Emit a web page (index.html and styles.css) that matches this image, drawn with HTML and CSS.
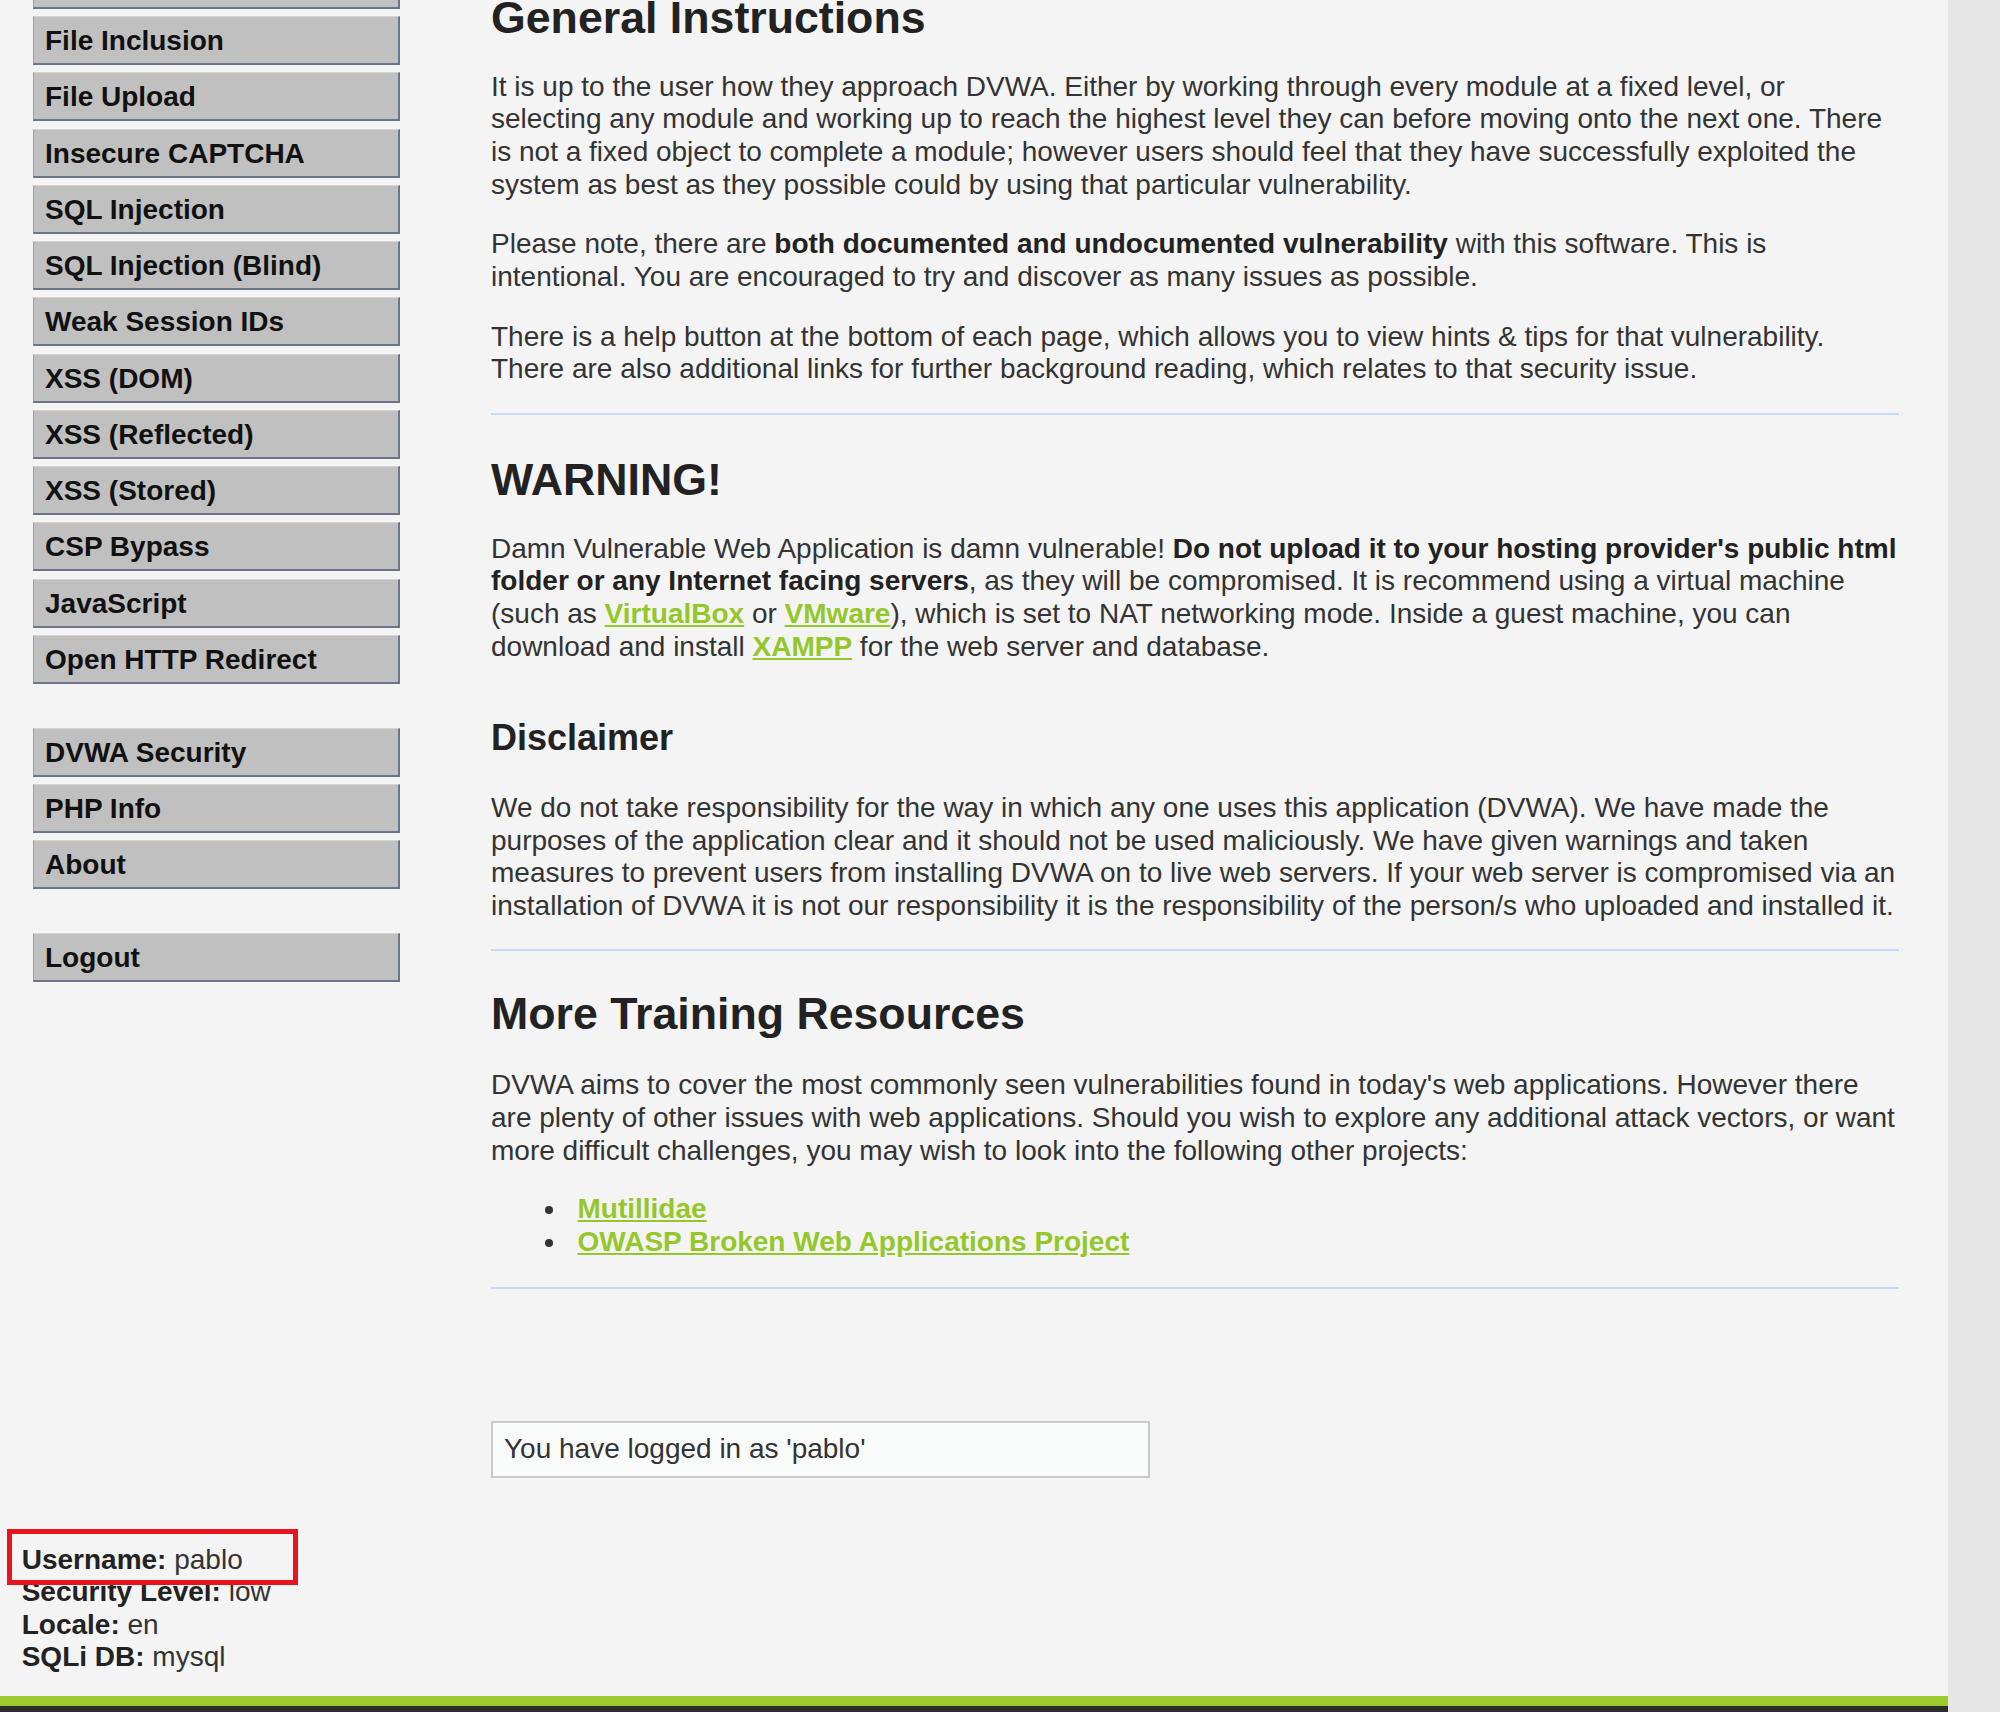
FILE: index.html
```html
<!DOCTYPE html>
<html>
<head>
  <title>DVWA</title>
  <link rel="stylesheet" href="styles.css">
</head>
<body>

  <div class="container">
    <div class="main">
      <div class="sidebar">
        <ul class="menu-block">
          <li><a href="#">CSRF</a></li>
          <li><a href="#">File Inclusion</a></li>
          <li><a href="#">File Upload</a></li>
          <li><a href="#">Insecure CAPTCHA</a></li>
          <li><a href="#">SQL Injection</a></li>
          <li><a href="#">SQL Injection (Blind)</a></li>
          <li><a href="#">Weak Session IDs</a></li>
          <li><a href="#">XSS (DOM)</a></li>
          <li><a href="#">XSS (Reflected)</a></li>
          <li><a href="#">XSS (Stored)</a></li>
          <li><a href="#">CSP Bypass</a></li>
          <li><a href="#">JavaScript</a></li>
          <li><a href="#">Open HTTP Redirect</a></li>
        </ul>
        <ul class="menu-block">
          <li><a href="#">DVWA Security</a></li>
          <li><a href="#">PHP Info</a></li>
          <li><a href="#">About</a></li>
        </ul>
        <ul class="menu-block">
          <li><a href="#">Logout</a></li>
        </ul>
      </div>

      <div class="content">
        <h1 class="page-title">General Instructions</h1>
        <p>It is up to the user how they approach DVWA. Either by working through every module at a fixed level, or selecting any module and working up to reach the highest level they can before moving onto the next one. There is not a fixed object to complete a module; however users should feel that they have successfully exploited the system as best as they possible could by using that particular vulnerability.</p>
        <p>Please note, there are <b>both documented and undocumented vulnerability</b> with this software. This is intentional. You are encouraged to try and discover as many issues as possible.</p>
        <p>There is a help button at the bottom of each page, which allows you to view hints &amp; tips for that vulnerability. There are also additional links for further background reading, which relates to that security issue.</p>
        <hr>

        <h1 class="warning">WARNING!</h1>
        <p>Damn Vulnerable Web Application is damn vulnerable! <b>Do not upload it to your hosting provider's public html folder or any Internet facing servers</b>, as they will be compromised. It is recommend using a virtual machine (such as <a href="#">VirtualBox</a> or <a href="#">VMware</a>), which is set to NAT networking mode. Inside a guest machine, you can download and install <a href="#">XAMPP</a> for the web server and database.</p>

        <h2>Disclaimer</h2>
        <p>We do not take responsibility for the way in which any one uses this application (DVWA). We have made the purposes of the application clear and it should not be used maliciously. We have given warnings and taken measures to prevent users from installing DVWA on to live web servers. If your web server is compromised via an installation of DVWA it is not our responsibility it is the responsibility of the person/s who uploaded and installed it.</p>
        <hr>

        <h1 class="resources">More Training Resources</h1>
        <p>DVWA aims to cover the most commonly seen vulnerabilities found in today's web applications. However there are plenty of other issues with web applications. Should you wish to explore any additional attack vectors, or want more difficult challenges, you may wish to look into the following other projects:</p>
        <ul class="links">
          <li><a href="#">Mutillidae</a></li>
          <li><a href="#">OWASP Broken Web Applications Project</a></li>
        </ul>
        <hr>

        <div class="message">You have logged in as 'pablo'</div>
      </div>
    </div>

    <div class="system-info">
      <div class="highlight"></div>
      <b>Username:</b> pablo<br>
      <b>Security Level:</b> low<br>
      <b>Locale:</b> en<br>
      <b>SQLi DB:</b> mysql
    </div>

    <div class="footer"></div>
  </div>

</body>
</html>
```

FILE: styles.css
```css
body {
  margin: 0;
  background-color: #e6e6e6;
  font-family: "Liberation Sans", Arial, sans-serif;
  font-size: 28px;
  color: #333;
}

.container {
  width: 1948px;
  background-color: #f4f4f4;
  overflow: hidden;
}

.main {
  display: flex;
  align-items: flex-start;
}

/* left menu */
.sidebar {
  width: 367px;
  flex-shrink: 0;
  margin-left: 33px;
  margin-top: -40.3px;
}

.menu-block {
  list-style: none;
  margin: 0 0 43.8px;
  padding: 0;
}

.menu-block li a {
  display: block;
  box-sizing: border-box;
  height: 49px;
  margin-bottom: 7.27px;
  padding: 8px 0 0 11px;
  line-height: 32px;
  background-color: #c0c0c0;
  border-top: 1px solid #d4d4d4;
  border-left: 1px solid #9d9d9d;
  border-right: 2px solid #6c7489;
  border-bottom: 2px solid #6c7489;
  color: #111;
  font-weight: bold;
  text-decoration: none;
}

/* main body */
.content {
  width: 1408px;
  flex-shrink: 0;
  margin-left: 91px;
}

.content h1 {
  font-size: 44.7px;
  line-height: 52px;
  margin: 36.5px 0 0;
  color: #222;
}

.content h1.page-title {
  margin-top: -8.5px;
}

.content h1.warning {
  margin-top: 39.6px;
}

.content h2 {
  font-size: 36px;
  line-height: 42px;
  margin: 54px 0 0;
  color: #222;
}

.content p {
  margin: 27px 0 0;
  line-height: 32.7px;
}

.content h1.warning + p {
  margin-top: 26.3px;
}

.content h2 + p {
  margin-top: 32.7px;
}

.content h1.resources + p {
  margin-top: 29.6px;
}

.content b {
  color: #222;
}

.content a {
  color: #94c72a;
  font-weight: bold;
}

.content hr {
  border: 0;
  height: 2px;
  margin: 26.5px 0 0;
  background-color: #c9d9f5;
}

.links {
  margin: 25.5px 0 0;
  padding-left: 77px;
  line-height: 32.7px;
}

.links li {
  padding-left: 9.5px;
}

.links + hr {
  margin-top: 28.5px;
}

.message {
  width: 659px;
  box-sizing: border-box;
  margin-top: 132px;
  padding: 10.3px 11px;
  line-height: 32.7px;
  border: 2px solid #cacaca;
  background-color: #f9fafa;
}

/* user info at the bottom left */
.system-info {
  position: relative;
  margin-top: 65.7px;
  padding-left: 21.7px;
  line-height: 32.3px;
}

.system-info b {
  color: #222;
}

.highlight {
  position: absolute;
  left: 7.3px;
  top: -15px;
  width: 291px;
  height: 56px;
  box-sizing: border-box;
  border: 5.6px solid #e5141d;
}

.footer {
  margin-top: 23.3px;
  height: 40px;
  border-top: 10px solid #9dcb2f;
  background-color: #2d2d2d;
}
```
